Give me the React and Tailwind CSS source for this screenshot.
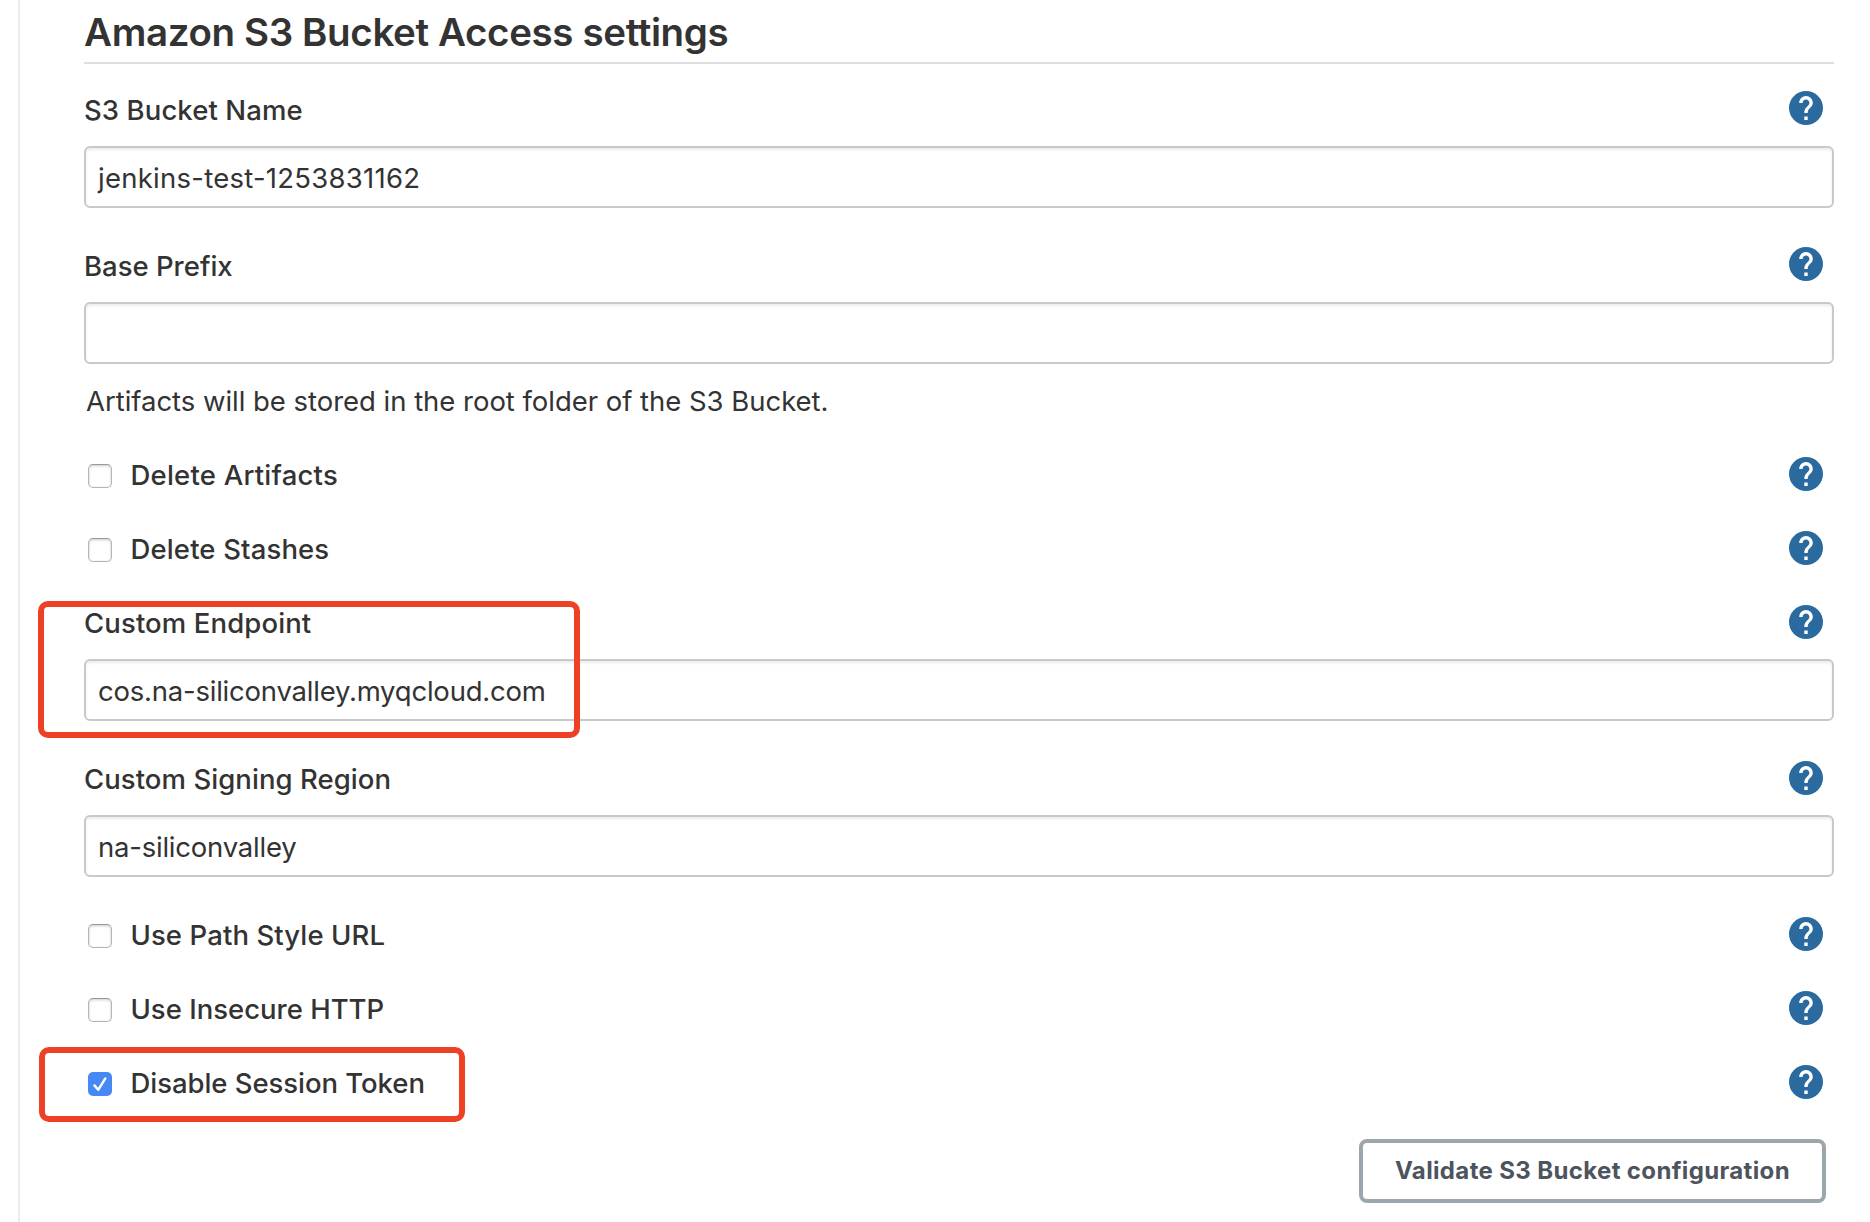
import React from "react";

function HelpIcon() {
  return (
    <svg viewBox="2 2 20 20" className="mr-[11px] size-[34px] shrink-0" role="img" aria-label="Help">
      <circle cx="12" cy="12" r="10" fill="#2a6a9e" />
      <path
        fill="#fff"
        d="M13 19h-2v-2h2v2zm2.07-7.75l-.9.92C13.45 12.9 13 13.5 13 15h-2v-.5c0-1.1.45-2.1 1.17-2.83l1.24-1.26c.37-.36.59-.86.59-1.41 0-1.1-.9-2-2-2s-2 .9-2 2H8c0-2.21 1.79-4 4-4s4 1.79 4 4c0 .88-.36 1.68-.93 2.25z"
      />
    </svg>
  );
}

function Field({ label, value, tracking, valueTracking, compact }) {
  return (
    <div className="h-[156px]">
      <div className={`flex items-center justify-between ${compact ? "h-[74px]" : "h-[75px] pb-px"}`}>
        <span className={`font-medium ${compact ? "pt-[2px]" : "pt-1"} ${tracking}`}>{label}</span>
        <HelpIcon />
      </div>
      <div className="flex h-[62px] items-center rounded-[6px] border-2 border-[#c9c9c9] bg-white px-3 pt-[2px] shadow-[inset_0_2px_3px_rgba(0,0,0,0.08)]">
        <span className={valueTracking}>{value}</span>
      </div>
    </div>
  );
}

function Option({ label, checked, tracking }) {
  return (
    <div className="flex h-[74px] items-center justify-between">
      <label className="flex items-center pl-1 pt-[3px]">
        {checked ? (
          <svg viewBox="0 0 24 24" className="size-6">
            <rect width="24" height="24" rx="5" fill="#4688f4" />
            <path d="M6.4 13.4l3.8 4.4L17.4 6.4" fill="none" stroke="#fff" strokeWidth="2.4" strokeLinecap="round" strokeLinejoin="round" />
          </svg>
        ) : (
          <span className="size-6 rounded-[5px] border border-[#b4b4b4] border-t-[#989898] bg-white shadow-[inset_0_1px_3px_rgba(0,0,0,0.2)]" />
        )}
        <span className={`ml-[18.5px] pb-[2px] font-medium ${tracking}`}>{label}</span>
      </label>
      <HelpIcon />
    </div>
  );
}

export default function App() {
  return (
    <div className="h-[1222px] w-[1870px] overflow-hidden bg-white pl-[18px] font-['Inter','Liberation_Sans',sans-serif] text-[27.5px] leading-[34px] whitespace-nowrap text-[#333]">
      <main className="relative h-full border-l-2 border-[#e8edf3] pr-9 pl-16">
        <h1 className="h-16 border-b-2 border-[#dedede] pt-[8px] text-[38.5px] leading-[48px] font-semibold tracking-[-0.37px]">
          Amazon S3 Bucket Access settings
        </h1>
        <div className="pt-[7px]">
          <Field label="S3 Bucket Name" value="jenkins-test-1253831162" tracking="tracking-[0.09px]" valueTracking="tracking-[0.26px]" />
          <Field label="Base Prefix" value="" tracking="tracking-[0px]" />
          <p className="h-[54px] pt-px pl-[2px] tracking-[-0.03px]">Artifacts will be stored in the root folder of the S3 Bucket.</p>
          <Option label="Delete Artifacts" tracking="tracking-[0.22px]" />
          <Option label="Delete Stashes" tracking="tracking-[0.14px]" />
          <Field compact label="Custom Endpoint" value="cos.na-siliconvalley.myqcloud.com" tracking="tracking-[0.12px]" valueTracking="tracking-[-0.22px]" />
          <Field compact label="Custom Signing Region" value="na-siliconvalley" tracking="tracking-[0.06px]" valueTracking="tracking-[-0.22px]" />
          <Option label="Use Path Style URL" tracking="tracking-[0.1px]" />
          <Option label="Use Insecure HTTP" tracking="tracking-[0px]" />
          <Option label="Disable Session Token" checked tracking="tracking-[-0.05px]" />
        </div>
        <div className="flex justify-end pt-5 pr-2">
          <button className="h-16 w-[467px] rounded-[8px] border-4 border-[#9ba6ad] bg-white pb-px text-[24px] font-bold tracking-[0.36px] text-[#4d545d]">
            Validate S3 Bucket configuration
          </button>
        </div>
        <div className="pointer-events-none absolute top-[601px] left-[18px] h-[137px] w-[542px] rounded-[10px] border-[6px] border-[#ee4025]" />
        <div className="pointer-events-none absolute top-[1047px] left-[19px] h-[75px] w-[426px] rounded-[10px] border-[6px] border-[#ee4025]" />
      </main>
    </div>
  );
}
